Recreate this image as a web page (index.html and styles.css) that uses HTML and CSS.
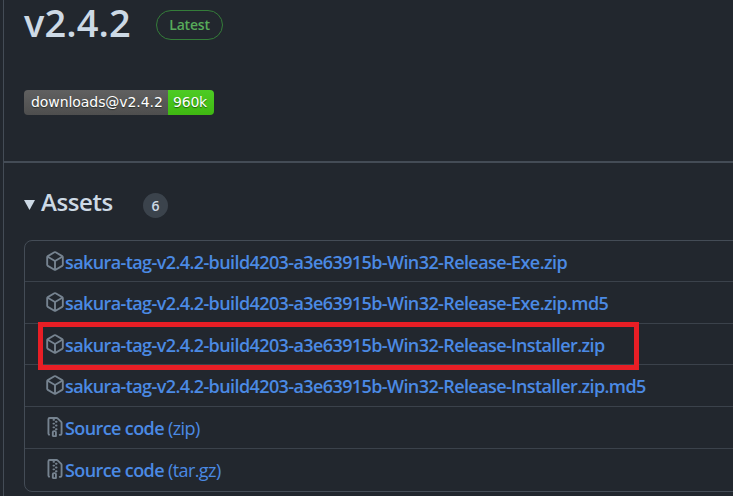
FILE: index.html
```html
<!DOCTYPE html>
<html lang="en">
<head>
<meta charset="utf-8">
<title>v2.4.2</title>
<link rel="stylesheet" href="styles.css">
</head>
<body>
<svg class="defs" width="0" height="0">
  <symbol id="package" viewBox="0 0 16 16"><path fill-rule="evenodd" d="M8.878.392a1.75 1.75 0 00-1.756 0l-5.25 3.045A1.75 1.75 0 001 4.951v6.098c0 .624.332 1.2.872 1.514l5.25 3.045a1.75 1.75 0 001.756 0l5.25-3.045c.54-.313.872-.89.872-1.514V4.951c0-.624-.332-1.2-.872-1.514L8.878.392zM7.875 1.69a.25.25 0 01.25 0l4.63 2.685L8 7.133 3.245 4.375l4.63-2.685zM2.5 5.677v5.372c0 .09.047.171.125.216l4.625 2.683V8.432L2.5 5.677zm6.25 8.271l4.625-2.683a.25.25 0 00.125-.216V5.677L8.75 8.432v5.516z"/></symbol>
  <symbol id="file-zip" viewBox="0 0 16 16"><path fill-rule="evenodd" d="M3.5 1.75a.25.25 0 01.25-.25h3a.75.75 0 000 1.5h.5a.75.75 0 000-1.5h2.086a.25.25 0 01.177.073l2.914 2.914a.25.25 0 01.073.177v8.586a.25.25 0 01-.25.25h-.5a.75.75 0 000 1.5h.5A1.75 1.75 0 0014 13.25V4.664c0-.464-.184-.909-.513-1.237L10.573.513A1.75 1.75 0 009.336 0H3.75A1.75 1.75 0 002 1.75v11.5c0 .649.353 1.214.874 1.515a.75.75 0 10.752-1.298.25.25 0 01-.126-.217V1.75zM8.75 3a.75.75 0 000 1.5h.5a.75.75 0 000-1.5h-.5zM6 5.25a.75.75 0 01.75-.75h.5a.75.75 0 010 1.5h-.5A.75.75 0 016 5.25zm2 1.5A.75.75 0 018.75 6h.5a.75.75 0 010 1.5h-.5A.75.75 0 018 6.75zm-1.25.75a.75.75 0 000 1.5h.5a.75.75 0 000-1.5h-.5zM8 9.75A.75.75 0 018.75 9h.5a.75.75 0 010 1.5h-.5A.75.75 0 018 9.75zm-.75.75a1.75 1.75 0 00-1.75 1.75v3c0 .414.336.75.75.75h2.5a.75.75 0 00.75-.75v-3a1.75 1.75 0 00-1.75-1.75h-.5zM7 12.25a.25.25 0 01.25-.25h.5a.25.25 0 01.25.25v2.25H7v-2.25z"/></symbol>
</svg>
<main class="release">
  <section class="summary">
    <header class="heading"><h1>v2.4.2</h1><span class="latest">Latest</span></header>
    <div class="shield"><span class="shield-name">downloads@v2.4.2</span><span class="shield-count">960k</span></div>
  </section>
  <section class="assets">
    <div class="assets-head">
      <svg class="caret" viewBox="0 0 11 10"><path d="M0 0H11L5.5 10Z"/></svg>
      <h2>Assets</h2><span class="counter">6</span>
    </div>
    <ul class="files">
      <li><svg class="icon"><use href="#package"/></svg><a>sakura-tag-v2.4.2-build4203-a3e63915b-Win32-Release-Exe.zip</a></li>
      <li><svg class="icon"><use href="#package"/></svg><a>sakura-tag-v2.4.2-build4203-a3e63915b-Win32-Release-Exe.zip.md5</a></li>
      <li class="marked"><svg class="icon"><use href="#package"/></svg><a>sakura-tag-v2.4.2-build4203-a3e63915b-Win32-Release-Installer.zip</a></li>
      <li><svg class="icon"><use href="#package"/></svg><a>sakura-tag-v2.4.2-build4203-a3e63915b-Win32-Release-Installer.zip.md5</a></li>
      <li><svg class="icon"><use href="#file-zip"/></svg><a>Source code <span class="kind">(zip)</span></a></li>
      <li><svg class="icon"><use href="#file-zip"/></svg><a>Source code <span class="kind">(tar.gz)</span></a></li>
    </ul>
  </section>
</main>
</body>
</html>
```

FILE: styles.css
```css
*, *::before, *::after { box-sizing: border-box; }
body { margin: 0; height: 496px; overflow: hidden; background: #22272e; color: #cdd9e5; font-family: "Open Sans", "Noto Sans", sans-serif; }
.defs { position: absolute; }
.release { height: 496px; margin-left: 3px; border-left: 1px solid #444c56; }
.summary { height: 163px; padding-left: 20px; border-bottom: 2px solid #444c56; }
.heading { display: flex; height: 90px; align-items: flex-start; }
h1 { width: 132px; margin: 0; font-size: 38px; line-height: 44px; font-weight: 600; letter-spacing: 0.1px; white-space: nowrap; }
.latest { width: 67px; height: 30px; margin-top: 10px; border: 1px solid #347d39; border-radius: 15px; color: #57ab5a; font-size: 14px; font-weight: 600; line-height: 28px; letter-spacing: -0.2px; text-align: center; }
.shield { display: flex; width: 190px; height: 25px; border-radius: 4px; overflow: hidden; color: #fff; font: 14px/25px "DejaVu Sans", sans-serif; text-shadow: 0 1px 1px #0108; white-space: nowrap; }
.shield-name { width: 144px; padding-left: 7px; background: linear-gradient(#606060, #4e4e4e); letter-spacing: -0.07px; }
.shield-count { width: 46px; padding-left: 5px; background: linear-gradient(#4dcb24, #3fb812); letter-spacing: -0.2px; }
.assets { padding-left: 20px; }
.assets-head { display: flex; height: 77px; }
.caret { width: 11px; height: 10px; margin: 37px 6px 0 0; fill: #cdd9e5; }
h2 { width: 102px; margin: 22px 0 0; font-size: 24px; line-height: 34px; font-weight: 600; letter-spacing: -0.4px; }
.counter { width: 25px; height: 25px; margin-top: 30px; border-radius: 50%; background: #3b434c; font-size: 14px; line-height: 25px; font-weight: 600; text-align: center; }
.files { display: grid; grid-template-rows: 41px 42px 41px 42px 42px 42px; width: 730px; height: 252px; margin: 0; padding: 0; list-style: none; border: 1px solid #444c56; border-radius: 8px; }
.files li { position: relative; display: flex; padding-left: 20px; border-bottom: 1px solid #3b424b; white-space: nowrap; }
.files li:last-child { border-bottom: 0; }
.icon { flex: none; width: 20px; height: 20px; margin-top: 10px; fill: #768390; }
a { color: #4b8ae4; font-size: 18px; line-height: 42px; font-weight: 600; letter-spacing: -0.6px; }
.kind { font-weight: 400; }
.marked::after { content: ""; position: absolute; left: 13px; top: -2px; width: 601px; height: 48px; border: 5px solid #e81e25; z-index: 1; }
```
